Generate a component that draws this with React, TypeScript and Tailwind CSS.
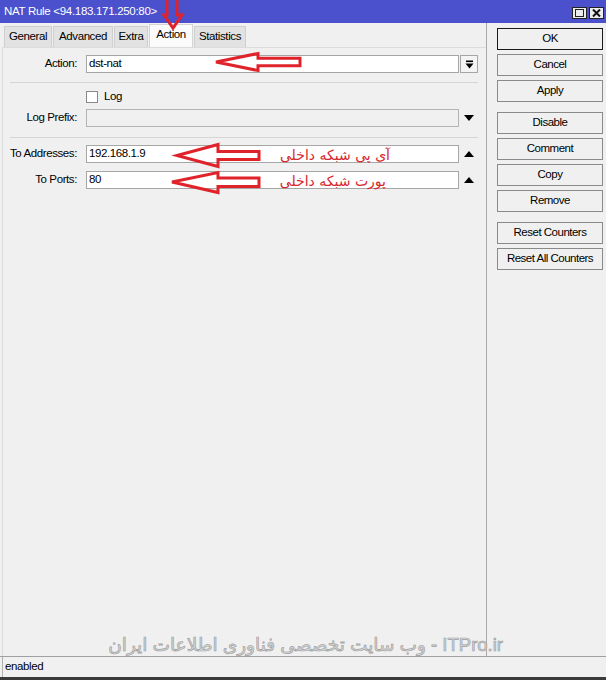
import React from "react";

const F = "font-['Liberation_Sans',Arial,sans-serif]";

function Btn({ children, def }: { children: React.ReactNode; def?: boolean }) {
  return (
    <div
      className={
        def
          ? "h-[22px] flex items-center justify-center border border-[#1a1a1a] bg-[#f0f0f0] text-[11.5px] tracking-[-0.5px] text-black whitespace-nowrap"
          : "h-[22px] flex items-center justify-center border border-[#8a8a8a] bg-[#f0f0f0] text-[11.5px] tracking-[-0.5px] text-black whitespace-nowrap"
      }
    >
      {children}
    </div>
  );
}

function Tab({ label, w, active }: { label: string; w: string; active?: boolean }) {
  return (
    <div
      className={
        active
          ? `${w} h-[23px] flex items-center justify-center bg-[#fbfbfb] border-t border-l border-r border-[#d4d4d4] text-[11.5px] tracking-[-0.4px] text-black pb-[2px]`
          : `${w} h-[21px] flex items-center justify-center bg-[#e2e2e2] border-t border-l border-r border-[#cfcfcf] text-[11.5px] tracking-[-0.4px] text-black`
      }
    >
      {label}
    </div>
  );
}

function UpTri() {
  return (
    <svg width="10" height="6" viewBox="0 0 10 6">
      <polygon points="0,6 10,6 5,0" fill="#000" />
    </svg>
  );
}
function DownTri() {
  return (
    <svg width="10" height="6" viewBox="0 0 10 6">
      <polygon points="0,0 10,0 5,6" fill="#000" />
    </svg>
  );
}

export default function App() {
  return (
    <div className={`${F} relative w-[606px] h-[680px] bg-[#f0f0f0] flex flex-col overflow-hidden`}>
      {/* Title bar */}
      <div className="h-[23px] bg-[#4b50cc] flex items-center justify-between pl-[4px] pr-[2px]">
        <span className="text-white text-[11.5px] tracking-[-0.3px] leading-none">NAT Rule &lt;94.183.171.250:80&gt;</span>
        <div className="flex items-center gap-[2px] mt-[2px]">
          <div className="w-[15px] h-[12px] bg-[#ececec] border border-[#222] flex items-center justify-center">
            <div className="w-[9px] h-[8px] border border-[#222]" />
          </div>
          <div className="w-[15px] h-[12px] bg-[#ececec] border border-[#222] flex items-center justify-center">
            <svg width="9" height="8" viewBox="0 0 9 8">
              <path d="M1 0.5 L8 7.5 M8 0.5 L1 7.5" stroke="#111" strokeWidth="2" />
            </svg>
          </div>
        </div>
      </div>

      {/* Main */}
      <div className="flex-1 flex">
        {/* Left */}
        <div className="w-[487px] flex flex-col border-r border-[#a9a9a9]">
          <div className="h-[24px] flex items-end pl-[4px] gap-[1px]">
            <Tab label="General" w="w-[48px]" />
            <Tab label="Advanced" w="w-[60px]" />
            <Tab label="Extra" w="w-[34px]" />
            <Tab label="Action" w="w-[44px]" active />
            <Tab label="Statistics" w="w-[52px]" />
          </div>
          <div className="flex-1 ml-[2px] border-l border-t border-[#dcdcdc] flex flex-col text-[11.5px] tracking-[-0.4px] text-black">
            {/* Action */}
            <div className="flex items-center mt-[7px] h-[18px]">
              <div className="w-[74px] text-right whitespace-nowrap">Action:</div>
              <div className="ml-[9px] w-[373px] h-[18px] bg-white border border-[#a6a6a6] flex items-center pl-[2px]">dst-nat</div>
              <div className="ml-[1px] w-[18px] h-[18px] border border-[#a6a6a6] bg-[#f4f4f4] flex items-center justify-center">
                <svg width="9" height="9" viewBox="0 0 9 9">
                  <rect x="1" y="0.5" width="7" height="1.6" fill="#000" />
                  <polygon points="0.5,3.5 8.5,3.5 4.5,8.5" fill="#000" />
                </svg>
              </div>
            </div>
            <div className="ml-[7px] w-[468px] h-[1px] bg-[#d6d6d6] mt-[9px]" />
            {/* Log */}
            <div className="flex items-center mt-[8px] h-[12px]">
              <div className="ml-[83px] w-[12px] h-[12px] bg-white border border-[#8a8a8a]" />
              <div className="ml-[6px]">Log</div>
            </div>
            {/* Log prefix */}
            <div className="flex items-center mt-[6px] h-[18px]">
              <div className="w-[74px] text-right whitespace-nowrap">Log Prefix:</div>
              <div className="ml-[9px] w-[373px] h-[18px] bg-[#f0f0f0] border border-[#b4b4b4]" />
              <div className="ml-[1px] w-[18px] flex items-center justify-center">
                <DownTri />
              </div>
            </div>
            <div className="ml-[7px] w-[468px] h-[1px] bg-[#d6d6d6] mt-[10px]" />
            {/* To Addresses */}
            <div className="flex items-center mt-[7px] h-[18px]">
              <div className="w-[74px] text-right whitespace-nowrap">To Addresses:</div>
              <div className="ml-[9px] w-[373px] h-[18px] bg-white border border-[#a6a6a6] flex items-center pl-[2px]">192.168.1.9</div>
              <div className="ml-[1px] w-[18px] flex items-center justify-center">
                <UpTri />
              </div>
            </div>
            {/* To Ports */}
            <div className="flex items-center mt-[8px] h-[18px]">
              <div className="w-[74px] text-right whitespace-nowrap">To Ports:</div>
              <div className="ml-[9px] w-[373px] h-[18px] bg-white border border-[#a6a6a6] flex items-center pl-[2px]">80</div>
              <div className="ml-[1px] w-[18px] flex items-center justify-center">
                <UpTri />
              </div>
            </div>
          </div>
        </div>
        {/* Right buttons */}
        <div className="w-[106px] ml-[10px] pt-[5px] flex flex-col">
          <div className="flex flex-col gap-[4px]">
            <Btn def>OK</Btn>
            <Btn>Cancel</Btn>
            <Btn>Apply</Btn>
          </div>
          <div className="flex flex-col gap-[4px] mt-[10px]">
            <Btn>Disable</Btn>
            <Btn>Comment</Btn>
            <Btn>Copy</Btn>
            <Btn>Remove</Btn>
          </div>
          <div className="flex flex-col gap-[4px] mt-[10px]">
            <Btn>Reset Counters</Btn>
            <Btn>Reset All Counters</Btn>
          </div>
        </div>
      </div>

      {/* Status bar */}
      <div className="h-[21px] border-t border-[#a0a0a0] flex">
        <div className="ml-[2px] border-l border-[#b0b0b0] flex-1 flex items-center pl-[2px] text-[11.5px] tracking-[-0.4px] text-black">enabled</div>
      </div>
      <div className="h-[3px] bg-[#3a3a3a]" />

      {/* Annotations overlay */}
      <svg className="absolute inset-0 pointer-events-none" width="606" height="680" viewBox="0 0 606 680">
        <g fill="none" stroke="#e0232b" strokeWidth="3" strokeLinejoin="miter">
          <polygon points="167,-3 177,-3 177,15 182,15 173,28 164,15 167,15" />
          <polygon points="216,62 258,53.5 258,58.3 300,58.3 300,65.7 258,65.7 258,70.5" />
          <polygon points="177,155.5 218,144.5 218,151.5 259,151.5 259,159.5 218,159.5 218,166.5" />
          <polygon points="172,182 218,172.5 218,178 259,178 259,186.5 218,186.5 218,192.5" />
        </g>
      </svg>
      <div
        dir="rtl"
        className="absolute left-[260px] w-[130px] top-[146px] h-[18px] flex items-center text-[14px] text-[#d8282e] font-['DejaVu_Sans',sans-serif] leading-none"
      >
        آی پی شبکه داخلی
      </div>
      <div
        dir="rtl"
        className="absolute left-[250px] w-[136px] top-[172px] h-[18px] flex items-center text-[14px] text-[#d8282e] font-['DejaVu_Sans',sans-serif] leading-none"
      >
        پورت شبکه داخلی
      </div>

      {/* Watermark */}
      <div
        dir="rtl"
        className="absolute left-[40px] w-[463px] top-[634px] h-[22px] flex items-center text-[18.5px] leading-none text-[#d9d9d9] [-webkit-text-stroke:0.7px_#a0a0a0] font-['Liberation_Sans','DejaVu_Sans',sans-serif] whitespace-nowrap"
      >
        ITPro.ir - وب سایت تخصصی فناوری اطلاعات ایران
      </div>
    </div>
  );
}
